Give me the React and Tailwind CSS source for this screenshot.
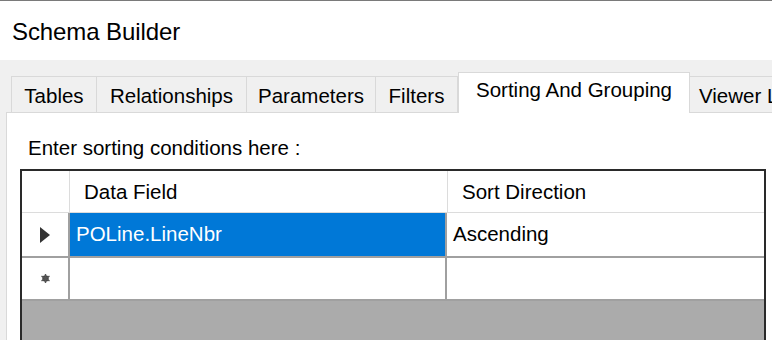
import React from 'react';

const tabs = [
  { label: 'Tables', width: 86 },
  { label: 'Relationships', width: 150 },
  { label: 'Parameters', width: 129 },
  { label: 'Filters', width: 82 },
  { label: 'Sorting And Grouping', width: 232, active: true },
  { label: 'Viewer Layout', width: 130, last: true },
];

const RowArrow = () => (
  <svg width="10" height="16" viewBox="0 0 10 16">
    <path d="M0 0 L10 8 L0 16 Z" fill="#333" />
  </svg>
);

const NewRowMark = () => (
  <svg width="9" height="9" viewBox="0 0 9 9">
    <circle cx="4.5" cy="4.5" r="3.2" fill="#444" />
    <path d="M4.5 0 V9 M0.5 2.2 L8.5 6.8 M0.5 6.8 L8.5 2.2" stroke="#555" strokeWidth="1.4" />
  </svg>
);

const App = () => {
  return (
    <div
      className="w-[772px] h-[340px] overflow-hidden bg-[#f0f0f0] border-t border-[#7a7a7a] text-[#000] text-[20.5px] leading-none"
      style={{ fontFamily: '"Liberation Sans", Arial, sans-serif' }}
    >
      {/* title */}
      <div className="h-[59px] bg-white flex items-center pl-[12px] pt-[2px] text-[24px] tracking-[-0.1px]">
        Schema Builder
      </div>

      {/* tab strip */}
      <div className="pt-[12px] pl-[6px]">
        <div className="flex items-end h-[40px] pl-[5px] whitespace-nowrap">
          {tabs.map((t) =>
            t.active ? (
              <div
                key={t.label}
                className="h-[41px] -mb-[1px] bg-white border border-b-0 border-[#d9d9d9] flex items-center justify-center pb-[6px] shrink-0 relative z-10"
                style={{ width: t.width }}
              >
                {t.label}
              </div>
            ) : t.last ? (
              <div
                key={t.label}
                className="h-[36px] bg-[#f0f0f0] border border-b-0 border-l-0 border-[#d9d9d9] flex items-center pl-[9px] pt-[3px] shrink-0"
                style={{ width: t.width }}
              >
                {t.label}
              </div>
            ) : (
              <div
                key={t.label}
                className="h-[36px] bg-[#f0f0f0] border border-b-0 border-l-0 first:border-l border-[#d9d9d9] flex items-center justify-center pt-[3px] shrink-0"
                style={{ width: t.width }}
              >
                {t.label}
              </div>
            )
          )}
        </div>

        {/* panel */}
        <div className="bg-white border-l border-t border-[#d9d9d9] h-[240px] pl-[13px] pt-[24px]">
          <div className="pl-[8px] h-[22px] flex items-center">Enter sorting conditions here :</div>

          <div className="mt-[10px] w-[746px] border-[2px] border-[#2a2a2a] bg-[#ababab] h-[200px]">
            {/* header */}
            <div className="flex h-[42px] bg-white border-b border-[#dcdcdc]">
              <div className="w-[48px] border-r border-[#dcdcdc]" />
              <div className="w-[378px] border-r border-[#dcdcdc] flex items-center pl-[14px] pt-[2px]">Data Field</div>
              <div className="flex-1 flex items-center pl-[14px] pt-[2px]">Sort Direction</div>
            </div>
            {/* row 1 */}
            <div className="flex h-[45px] bg-white border-b-[2px] border-[#a0a0a0]">
              <div className="w-[48px] border-r-[2px] border-[#a0a0a0] flex items-center justify-center">
                <RowArrow />
              </div>
              <div className="w-[377px] border-r-[2px] border-[#a0a0a0] bg-[#0078d7] text-white flex items-center pl-[6px]">
                POLine.LineNbr
              </div>
              <div className="flex-1 flex items-center pl-[6px]">Ascending</div>
            </div>
            {/* new row */}
            <div className="flex h-[43px] bg-white border-b-[2px] border-[#a0a0a0]">
              <div className="w-[48px] border-r-[2px] border-[#a0a0a0] flex items-center justify-center">
                <NewRowMark />
              </div>
              <div className="w-[377px] border-r-[2px] border-[#a0a0a0]" />
              <div className="flex-1" />
            </div>
          </div>
        </div>
      </div>
    </div>
  );
};

export default App;
